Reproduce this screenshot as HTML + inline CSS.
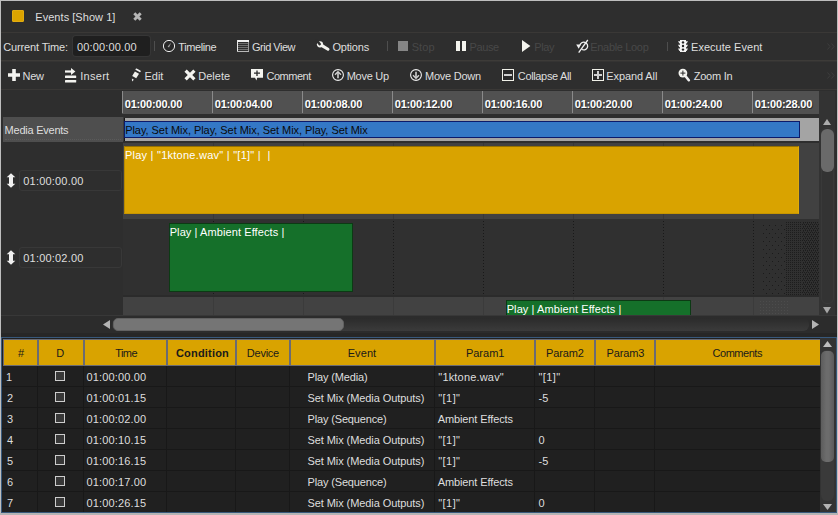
<!DOCTYPE html>
<html><head><meta charset="utf-8"><title>Events [Show 1]</title>
<style>
*{box-sizing:border-box;margin:0;padding:0}
html,body{width:838px;height:515px;overflow:hidden;background:#2e2e2e}
body{position:relative;font-family:"Liberation Sans","DejaVu Sans",sans-serif;font-size:11px;color:#dedede;line-height:13px}
.a{position:absolute;white-space:nowrap}
.t{position:absolute;white-space:nowrap;height:13px;line-height:13px}
.dis{color:#484848}
.sep{position:absolute;width:1px;background:#4e4e4e}
svg{position:absolute;overflow:visible}
.rt{position:absolute;top:98px;height:13px;line-height:13px;font-weight:bold;color:#fff;text-shadow:1px 1px 0 #2b2b2b;white-space:nowrap;letter-spacing:-0.3px}
.tick{position:absolute;top:91px;width:1px;height:22px;background:#8a8a8a}
.gl{position:absolute;width:0;border-left:1px dotted #262626}
.hc{position:absolute;top:340px;height:25px;background:#d9a300;color:#1a1a1a;text-align:center;line-height:26px;white-space:nowrap;overflow:hidden}
.vl{position:absolute;top:366px;width:1px;height:146px;background:#181818}
.hl{position:absolute;left:2px;width:818px;height:1px;background:#181818}
.c{position:absolute;white-space:nowrap;height:13px;line-height:13px}
.cb{position:absolute;left:55px;width:10px;height:10px;border:1px solid #cdcdcd;background:#383838}
</style></head><body>

<!-- tab row -->
<div class="a" style="left:12px;top:10px;width:12px;height:12px;background:#dca400;border:1px solid #e2ac10;border-radius:1px"></div>
<svg style="left:133px;top:12px" width="9" height="9" viewBox="0 0 9 9"><path d="M1.3 1.3L7.7 7.7M7.7 1.3L1.3 7.7" stroke="#b6b6b6" stroke-width="2.9" fill="none"/></svg>
<div class="a" style="left:1px;top:32px;width:836px;height:1px;background:#3a3836"></div>

<!-- toolbar 1 -->
<div class="a" style="left:73px;top:36px;width:77px;height:20px;background:#1f1f1f;border-radius:3px;box-shadow:0 0 0 1px #363636"></div>
<div class="sep" style="left:154px;top:41px;height:10px"></div>
<div class="sep" style="left:387px;top:41px;height:10px"></div>
<div class="sep" style="left:667px;top:42px;height:9px"></div>
<div class="a" style="left:1px;top:60px;width:836px;height:1px;background:#3d3b38"></div><div class="a" style="left:1px;top:61px;width:836px;height:1px;background:#353433"></div>
<svg style="left:827px;top:43px" width="8" height="7" viewBox="0 0 8 7"><path d="M0.5 0.5L3 3.5L0.5 6.5M4.5 0.5L7 3.5L4.5 6.5" stroke="#3d3d3d" stroke-width="1" fill="none"/></svg>
<svg style="left:827px;top:72px" width="8" height="7" viewBox="0 0 8 7"><path d="M0.5 0.5L3 3.5L0.5 6.5M4.5 0.5L7 3.5L4.5 6.5" stroke="#3d3d3d" stroke-width="1" fill="none"/></svg>

<!-- toolbar 1 icons -->
<svg style="left:162px;top:39px" width="14" height="14" viewBox="0 0 14 14"><circle cx="7" cy="7" r="5.6" fill="#282828" stroke="#ececec" stroke-width="1"/><path d="M5.6 7.4L9.2 3.8L7 8.6Z" fill="#a4a4a4"/></svg>
<svg style="left:237px;top:40px" width="12" height="12" viewBox="0 0 12 12"><rect x="0" y="0" width="12" height="2" fill="#f2f2f2"/><rect x="0" y="0" width="1" height="12" fill="#e8e8e8"/><rect x="11" y="2" width="1" height="10" fill="#9a9a9a"/><rect x="0" y="11" width="12" height="1" fill="#b8b8b8"/><rect x="1" y="3" width="10" height="1" fill="#6e6e6e"/><rect x="1" y="5" width="10" height="1" fill="#6e6e6e"/><rect x="1" y="7" width="10" height="1" fill="#6e6e6e"/><rect x="1" y="9" width="10" height="1" fill="#6e6e6e"/></svg>
<svg style="left:317px;top:41px" width="13" height="11" viewBox="0 0 13 11"><path d="M4.6 4.4L11 8.3" stroke="#f2f2ee" stroke-width="3" stroke-linecap="round" fill="none"/><circle cx="3" cy="3.3" r="3.1" fill="#f2f2ee"/><path d="M2.7 3.1L-0.6 -0.8" stroke="#2e2e2e" stroke-width="2.5" stroke-linecap="round" fill="none"/></svg>
<svg style="left:398px;top:41px" width="10" height="10" viewBox="0 0 10 10"><rect width="10" height="10" fill="#868686"/></svg>
<svg style="left:456px;top:41px" width="10" height="10" viewBox="0 0 10 10"><rect x="0" y="0" width="4" height="10" fill="#f4f4ee"/><rect x="6" y="0" width="4" height="10" fill="#f4f4ee"/></svg>
<svg style="left:522px;top:40px" width="9" height="12" viewBox="0 0 9 12"><path d="M0 0L8.4 6L0 12Z" fill="#f4f4ee"/></svg>
<svg style="left:576px;top:39px" width="13" height="14" viewBox="0 0 13 14"><path d="M3.9 6.4A3.9 3.9 0 1 1 5.6 10.3" stroke="#f0f0f0" stroke-width="1.3" fill="none"/><path d="M0.2 5.6L4.9 5.6L2.7 9.8Z" fill="#f0f0f0"/><path d="M2.7 13.6L11.8 1" stroke="#f0f0f0" stroke-width="1.3" fill="none"/></svg>
<svg style="left:678px;top:40px" width="10" height="12" viewBox="0 0 10 12"><path d="M2 0H8V1.2L10 1.2L8.6 3.6H8V4.8L10 4.8L8.6 7.2H8V8.6L10 8.6L8.6 11H8V12H2V11H1.4L0 8.6L2 8.6V7.2H1.4L0 4.8L2 4.8V3.6H1.4L0 1.2L2 1.2Z" fill="#f4f4f4"/><circle cx="5" cy="2.4" r="1.2" fill="#222"/><circle cx="5" cy="6" r="1.2" fill="#222"/><circle cx="5" cy="9.6" r="1.2" fill="#222"/></svg>

<!-- toolbar 2 -->
<div class="a" style="left:1px;top:89px;width:836px;height:1px;background:#3a3836"></div>

<!-- toolbar 2 icons -->
<svg style="left:8px;top:69px" width="12" height="12" viewBox="0 0 12 12"><path d="M4.2 0H7.8V4.2H12V7.8H7.8V12H4.2V7.8H0V4.2H4.2Z" fill="#f4f4f0"/></svg>
<svg style="left:65px;top:68px" width="12" height="15" viewBox="0 0 12 15"><rect x="0" y="2.4" width="7" height="2.2" fill="#f4f4f0"/><path d="M6 0L10.4 3.5L6 7Z" fill="#f4f4f0"/><rect x="0" y="7.4" width="11.2" height="2.6" rx="0.6" fill="#f4f4f0"/><rect x="0" y="12" width="11.2" height="2.6" rx="0.6" fill="#f4f4f0"/></svg>
<svg style="left:131px;top:68px" width="10" height="14" viewBox="0 0 10 14"><path d="M5.3 1.3L8.9 3.3" stroke="#f0f0f0" stroke-width="1.7" stroke-linecap="round" fill="none"/><path d="M3.9 3.5L8 5.7L5.2 10.3L1.2 8Z" fill="#f2f2ee"/><path d="M0.9 10.6L2.9 11.8L1 13.4Z" fill="#e8e8e8"/></svg>
<svg style="left:184px;top:69px" width="12" height="12" viewBox="0 0 12 12"><path d="M1.6 1.6L10.4 10.4M10.4 1.6L1.6 10.4" stroke="#f4f4f0" stroke-width="3.2" fill="none"/></svg>
<svg style="left:251px;top:69px" width="12" height="12" viewBox="0 0 12 12"><path d="M0 0H12V8.8H6.2L5.4 11.6L4 8.8H0Z" fill="#f4f4f0"/><path d="M3 4.2H9M6 1.4V7" stroke="#2a2a2a" stroke-width="1.3" fill="none"/></svg>
<svg style="left:332px;top:69px" width="12" height="12" viewBox="0 0 12 12"><circle cx="6" cy="6" r="5.4" fill="#262626" stroke="#f0f0f0" stroke-width="1.1"/><path d="M6 3.2V9.3" stroke="#b4b4b4" stroke-width="1.9" fill="none"/><path d="M3 5.8L6 2.7L9 5.8" stroke="#cfcfcf" stroke-width="1.4" fill="none"/></svg>
<svg style="left:410px;top:69px" width="12" height="12" viewBox="0 0 12 12"><circle cx="6" cy="6" r="5.4" fill="#262626" stroke="#f0f0f0" stroke-width="1.1"/><path d="M6 8.8V2.7" stroke="#b4b4b4" stroke-width="1.9" fill="none"/><path d="M3 6.2L6 9.3L9 6.2" stroke="#cfcfcf" stroke-width="1.4" fill="none"/></svg>
<svg style="left:502px;top:69px" width="12" height="12" viewBox="0 0 12 12"><rect x="0.5" y="0.5" width="11" height="11" fill="#2a2a2a" stroke="#f0f0e8" stroke-width="1"/><rect x="2" y="5" width="8" height="2" fill="#d0d0d0"/></svg>
<svg style="left:592px;top:69px" width="12" height="12" viewBox="0 0 12 12"><rect x="0.5" y="0.5" width="11" height="11" fill="#2a2a2a" stroke="#f0f0e8" stroke-width="1"/><rect x="2" y="5" width="8" height="2" fill="#d0d0d0"/><rect x="5" y="2" width="2" height="8" fill="#d0d0d0"/></svg>
<svg style="left:678px;top:68px" width="13" height="14" viewBox="0 0 13 14"><path d="M6.6 7L10.8 12.2" stroke="#f0f0f0" stroke-width="2.6" stroke-linecap="round" fill="none"/><circle cx="4.9" cy="5.1" r="4.4" fill="#f4f4f0"/><path d="M2.4 5.1H7.4M4.9 2.6V7.6" stroke="#2a2a2a" stroke-width="1" fill="none"/></svg>

<!-- ================= timeline ================= -->
<!-- ruler -->
<div class="a" style="left:819px;top:91px;width:16px;height:225px;background:#333"></div>
<div class="a" style="left:122px;top:91px;width:697px;height:23px;background:#515151"></div>
<div class="tick" style="left:122px"></div>
<div class="tick" style="left:212px"></div>
<div class="tick" style="left:302px"></div>
<div class="tick" style="left:392px"></div>
<div class="tick" style="left:482px"></div>
<div class="tick" style="left:572px"></div>
<div class="tick" style="left:662px"></div>
<div class="tick" style="left:752px"></div>

<!-- media events row -->
<div class="a" style="left:3px;top:117px;width:120px;height:25px;background:#4e4e4e"></div><div class="a" style="left:5px;top:139px;width:116px;height:0;border-top:1px dotted #5a5a5a"></div>
<div class="a" style="left:123px;top:117px;width:1px;height:24px;background:#3a3a3a"></div><div class="a" style="left:124px;top:118px;width:1px;height:23px;background:#141414"></div>
<div class="a" style="left:125px;top:118px;width:694px;height:23px;background:#a4a4a4"></div>
<div class="a" style="left:124px;top:121px;width:676px;height:17px;background:#3478c6;border:1px solid #0c1a6a"></div>

<!-- row backgrounds -->
<div class="a" style="left:123px;top:143px;width:696px;height:76px;background:#414141"></div>
<div class="a" style="left:123px;top:219px;width:696px;height:76px;background:#303030"></div>
<div class="a" style="left:123px;top:295px;width:696px;height:2px;background:#2b2b2b"></div>
<div class="a" style="left:123px;top:297px;width:696px;height:18px;background:#424242"></div>
<svg style="left:123px;top:143px" width="696" height="172" viewBox="123 143 696 172" shape-rendering="crispEdges"><defs><pattern id="d4" width="4" height="4" patternUnits="userSpaceOnUse"><rect x="1" y="1" width="1" height="1" fill="#1d1d1d"/><rect x="3" y="3" width="1" height="1" fill="#1d1d1d" opacity="0"/></pattern><pattern id="d5" width="6" height="8" patternUnits="userSpaceOnUse"><rect x="1" y="1" width="1" height="1" fill="#1b1b1b"/><rect x="4" y="5" width="1" height="1" fill="#1b1b1b"/></pattern><pattern id="d2" width="2" height="2" patternUnits="userSpaceOnUse"><rect x="0" y="0" width="1" height="1" fill="#1d1d1d"/></pattern><pattern id="d3" width="4" height="4" patternUnits="userSpaceOnUse"><rect x="0" y="0" width="1" height="1" fill="#1c1c1c"/><rect x="2" y="0" width="1" height="1" fill="#1c1c1c"/><rect x="1" y="2" width="1" height="1" fill="#1c1c1c"/><rect x="3" y="2" width="1" height="1" fill="#1c1c1c"/><rect x="1" y="1" width="1" height="1" fill="#1c1c1c" opacity="0.6"/><rect x="3" y="3" width="1" height="1" fill="#1c1c1c" opacity="0.6"/></pattern><pattern id="l4" width="3" height="3" patternUnits="userSpaceOnUse"><rect x="1" y="1" width="1" height="1" fill="#4c4c4c"/></pattern></defs><rect x="213" y="143" width="1" height="76" fill="#383838"/><line x1="213.5" y1="221" x2="213.5" y2="295" stroke="#191919" stroke-width="1" stroke-dasharray="1 2"/><rect x="213" y="297" width="1" height="18" fill="#3b3b3b"/><rect x="303" y="143" width="1" height="76" fill="#383838"/><line x1="303.5" y1="221" x2="303.5" y2="295" stroke="#191919" stroke-width="1" stroke-dasharray="1 2"/><rect x="303" y="297" width="1" height="18" fill="#3b3b3b"/><rect x="393" y="143" width="1" height="76" fill="#383838"/><line x1="393.5" y1="221" x2="393.5" y2="295" stroke="#191919" stroke-width="1" stroke-dasharray="1 2"/><rect x="393" y="297" width="1" height="18" fill="#3b3b3b"/><rect x="483" y="143" width="1" height="76" fill="#383838"/><line x1="483.5" y1="221" x2="483.5" y2="295" stroke="#191919" stroke-width="1" stroke-dasharray="1 2"/><rect x="483" y="297" width="1" height="18" fill="#3b3b3b"/><rect x="573" y="143" width="1" height="76" fill="#383838"/><line x1="573.5" y1="221" x2="573.5" y2="295" stroke="#191919" stroke-width="1" stroke-dasharray="1 2"/><rect x="573" y="297" width="1" height="18" fill="#3b3b3b"/><rect x="663" y="143" width="1" height="76" fill="#383838"/><line x1="663.5" y1="221" x2="663.5" y2="295" stroke="#191919" stroke-width="1" stroke-dasharray="1 2"/><rect x="663" y="297" width="1" height="18" fill="#3b3b3b"/><rect x="753" y="143" width="1" height="76" fill="#383838"/><line x1="753.5" y1="221" x2="753.5" y2="295" stroke="#191919" stroke-width="1" stroke-dasharray="1 2"/><rect x="753" y="297" width="1" height="18" fill="#3b3b3b"/><rect x="763" y="222" width="23" height="73" fill="url(#d5)"/><rect x="786" y="222" width="16" height="73" fill="url(#d2)"/><rect x="802" y="222" width="17" height="73" fill="url(#d3)"/><rect x="760" y="299" width="30" height="16" fill="url(#l4)"/></svg>
<!-- row 1 -->
<div class="a" style="left:124px;top:146px;width:675px;height:68px;background:#d9a300;border:1px solid #b88a00;border-top-color:#987200;border-right-color:#e0ac08;border-bottom-color:#c89600"></div>
<div class="a" style="left:19px;top:170px;width:103px;height:21px;border:1px solid #383838;border-radius:3px"></div>
<svg style="left:6px;top:173px" width="10" height="15" viewBox="0 0 10 15"><path d="M5 0.3L9.3 4.3H7V10.7H9.3L5 14.7L0.7 10.7H3V4.3H0.7Z" fill="#f0f0f0"/></svg>
<!-- row 2 -->
<div class="a" style="left:169px;top:223px;width:184px;height:69px;background:#15702a;border:1px solid #0c3a14"></div>
<div class="a" style="left:19px;top:247px;width:103px;height:21px;border:1px solid #383838;border-radius:3px"></div>
<svg style="left:6px;top:250px" width="10" height="15" viewBox="0 0 10 15"><path d="M5 0.3L9.3 4.3H7V10.7H9.3L5 14.7L0.7 10.7H3V4.3H0.7Z" fill="#f0f0f0"/></svg>
<!-- row 3 -->
<div class="a" style="left:506px;top:300px;width:185px;height:15px;background:#15702a;border:1px solid #0c3a14;border-bottom:none"></div>

<!-- timeline vscroll -->
<svg style="left:823px;top:119px" width="8" height="6" viewBox="0 0 8 6"><path d="M4 0L8 6H0Z" fill="#adadad"/></svg>
<div class="a" style="left:821px;top:127px;width:13px;height:177px;border:1px solid #393939;border-radius:6px"></div>
<div class="a" style="left:821px;top:129px;width:13px;height:43px;background:#6a6a6a;border-radius:6px"></div>
<svg style="left:823px;top:307px" width="8" height="7" viewBox="0 0 8 7"><path d="M0 0H8L4 6.6Z" fill="#a6a6a6"/></svg>

<!-- hscroll -->
<div class="a" style="left:1px;top:315px;width:836px;height:22px;background:#2c2c2c"></div><div class="a" style="left:1px;top:315px;width:836px;height:1px;background:#383838"></div><div class="a" style="left:1px;top:333px;width:836px;height:4px;background:#272727"></div>
<div class="a" style="left:112px;top:318px;width:697px;height:13px;background:linear-gradient(#2b2b2b,#3b3b3b);border-radius:6px"></div>
<div class="a" style="left:113px;top:318px;width:231px;height:13px;background:#757575;border:1px solid #626262;border-radius:5px"></div>
<svg style="left:103px;top:320px" width="7" height="9" viewBox="0 0 7 9"><path d="M7 0V9L0 4.5Z" fill="#b4b4b4"/></svg>
<svg style="left:812px;top:320px" width="7" height="9" viewBox="0 0 7 9"><path d="M0 0V9L7 4.5Z" fill="#b4b4b4"/></svg>

<!-- ================= grid ================= -->
<div class="a" style="left:1px;top:337px;width:836px;height:176px;background:#202020;border:1px solid #38597c"></div>
<div class="a" style="left:3px;top:339px;width:817px;height:27px;background:#6b6b73"></div>
<div class="a" style="left:820px;top:338px;width:16px;height:174px;background:#333"></div>
<div class="hc" style="left:4px;width:33px"></div>
<div class="hc" style="left:39px;width:44px"></div>
<div class="hc" style="left:85px;width:81px"></div>
<div class="hc" style="left:168px;width:67px;font-weight:bold"></div>
<div class="hc" style="left:237px;width:52px"></div>
<div class="hc" style="left:291px;width:143px"></div>
<div class="hc" style="left:436px;width:98px"></div>
<div class="hc" style="left:536px;width:58px"></div>
<div class="hc" style="left:596px;width:58px"></div>
<div class="hc" style="left:656px;width:164px"></div>

<div class="vl" style="left:37px"></div>
<div class="vl" style="left:83px"></div>
<div class="vl" style="left:166px"></div>
<div class="vl" style="left:235px"></div>
<div class="vl" style="left:289px"></div>
<div class="vl" style="left:434px"></div>
<div class="vl" style="left:534px"></div>
<div class="vl" style="left:594px"></div>
<div class="vl" style="left:654px"></div>
<div class="hl" style="top:386px"></div>
<div class="hl" style="top:407px"></div>
<div class="hl" style="top:428px"></div>
<div class="hl" style="top:449px"></div>
<div class="hl" style="top:470px"></div>
<div class="hl" style="top:491px"></div>
<div class="cb" style="top:371px"></div>
<div class="cb" style="top:392px"></div>
<div class="cb" style="top:413px"></div>
<div class="cb" style="top:434px"></div>
<div class="cb" style="top:455px"></div>
<div class="cb" style="top:476px"></div>
<div class="cb" style="top:497px"></div>
<svg style="left:823px;top:341px" width="9" height="6" viewBox="0 0 9 6"><path d="M4.5 0L9 6H0Z" fill="#bdbdbd"/></svg>
<div class="a" style="left:821px;top:350px;width:13px;height:151px;background:#3a3a3a;border-radius:6px"></div>
<div class="a" style="left:821px;top:351px;width:13px;height:111px;background:linear-gradient(90deg,#5c5c5c,#6c6c6c 40%,#6c6c6c 60%,#5a5a5a);border-radius:5px"></div>
<svg style="left:823px;top:504px" width="9" height="6" viewBox="0 0 9 6"><path d="M0 0H9L4.5 6Z" fill="#b4b4b4"/></svg>
<div class="t" style="left:35.3px;top:11px;letter-spacing:0.04px;">Events [Show 1]</div>
<div class="t" style="left:3.3px;top:41px;letter-spacing:-0.15px;">Current Time:</div>
<div class="t" style="left:77.0px;top:41px;letter-spacing:0.16px;">00:00:00.00</div>
<div class="t" style="left:178.3px;top:41px;letter-spacing:-0.40px;">Timeline</div>
<div class="t" style="left:252.0px;top:41px;letter-spacing:-0.50px;">Grid View</div>
<div class="t" style="left:332.4px;top:41px;letter-spacing:-0.18px;">Options</div>
<div class="t dis" style="left:411.7px;top:41px;letter-spacing:0.10px;">Stop</div>
<div class="t dis" style="left:469.5px;top:41px;letter-spacing:-0.38px;">Pause</div>
<div class="t dis" style="left:534.3px;top:41px;letter-spacing:-0.43px;">Play</div>
<div class="t dis" style="left:590.3px;top:41px;letter-spacing:-0.33px;">Enable Loop</div>
<div class="t" style="left:691.0px;top:41px;letter-spacing:0.04px;">Execute Event</div>
<div class="t" style="left:22.4px;top:70px;letter-spacing:-0.20px;">New</div>
<div class="t" style="left:80.3px;top:70px;letter-spacing:0.26px;">Insert</div>
<div class="t" style="left:144.5px;top:70px;letter-spacing:-0.03px;">Edit</div>
<div class="t" style="left:198.2px;top:70px;letter-spacing:0.02px;">Delete</div>
<div class="t" style="left:266.5px;top:70px;letter-spacing:-0.48px;">Comment</div>
<div class="t" style="left:346.7px;top:70px;letter-spacing:-0.28px;">Move Up</div>
<div class="t" style="left:425.1px;top:70px;letter-spacing:-0.26px;">Move Down</div>
<div class="t" style="left:517.8px;top:70px;letter-spacing:-0.35px;">Collapse All</div>
<div class="t" style="left:606.3px;top:70px;letter-spacing:-0.10px;">Expand All</div>
<div class="t" style="left:693.7px;top:70px;letter-spacing:-0.23px;">Zoom In</div>
<div class="rt" style="left:124.7px;top:98px;letter-spacing:-0.17px;">01:00:00.00</div>
<div class="rt" style="left:214.7px;top:98px;letter-spacing:-0.17px;">01:00:04.00</div>
<div class="rt" style="left:304.7px;top:98px;letter-spacing:-0.17px;">01:00:08.00</div>
<div class="rt" style="left:394.7px;top:98px;letter-spacing:-0.17px;">01:00:12.00</div>
<div class="rt" style="left:484.7px;top:98px;letter-spacing:-0.17px;">01:00:16.00</div>
<div class="rt" style="left:574.7px;top:98px;letter-spacing:-0.17px;">01:00:20.00</div>
<div class="rt" style="left:664.7px;top:98px;letter-spacing:-0.17px;">01:00:24.00</div>
<div class="rt" style="left:754.7px;top:98px;letter-spacing:-0.17px;">01:00:28.00</div>
<div class="t" style="left:4.6px;top:124px;letter-spacing:-0.24px;">Media Events</div>
<div class="t" style="left:125.2px;top:124px;letter-spacing:-0.05px;color:#0a0a0a">Play, Set Mix, Play, Set Mix, Set Mix, Play, Set Mix</div>
<div class="t" style="left:124.9px;top:149px;letter-spacing:0.25px;color:#fff">Play | "1ktone.wav" | "[1]" |&nbsp; |</div>
<div class="t" style="left:23.3px;top:175px;letter-spacing:0.19px;">01:00:00.00</div>
<div class="t" style="left:169.7px;top:226px;letter-spacing:0.09px;color:#fff">Play | Ambient Effects |</div>
<div class="t" style="left:23.3px;top:252px;letter-spacing:0.19px;">01:00:02.00</div>
<div class="t" style="left:506.7px;top:303px;letter-spacing:0.09px;color:#fff">Play | Ambient Effects |</div>
<div class="t" style="left:18.0px;top:347px;color:#1a1a1a">#</div>
<div class="t" style="left:56.3px;top:347px;color:#1a1a1a">D</div>
<div class="t" style="left:115.3px;top:347px;letter-spacing:-0.60px;color:#1a1a1a">Time</div>
<div class="t b" style="left:176.0px;top:347px;letter-spacing:0.18px;color:#1a1a1a;font-weight:bold">Condition</div>
<div class="t" style="left:246.8px;top:347px;letter-spacing:-0.24px;color:#1a1a1a">Device</div>
<div class="t" style="left:347.7px;top:347px;letter-spacing:0.08px;color:#1a1a1a">Event</div>
<div class="t" style="left:465.9px;top:347px;color:#1a1a1a">Param1</div>
<div class="t" style="left:546.1px;top:347px;letter-spacing:-0.14px;color:#1a1a1a">Param2</div>
<div class="t" style="left:606.6px;top:347px;letter-spacing:-0.16px;color:#1a1a1a">Param3</div>
<div class="t" style="left:712.5px;top:347px;letter-spacing:-0.46px;color:#1a1a1a">Comments</div>
<div class="t" style="left:6.0px;top:371px;">1</div>
<div class="t" style="left:86.6px;top:371px;letter-spacing:0.14px;">01:00:00.00</div>
<div class="t" style="left:307.5px;top:371px;letter-spacing:-0.14px;">Play (Media)</div>
<div class="t" style="left:438.3px;top:371px;letter-spacing:0.18px;">&quot;1ktone.wav&quot;</div>
<div class="t" style="left:538.5px;top:371px;letter-spacing:0.38px;">&quot;[1]&quot;</div>
<div class="t" style="left:7.0px;top:392px;">2</div>
<div class="t" style="left:86.6px;top:392px;letter-spacing:0.14px;">01:00:01.15</div>
<div class="t" style="left:307.5px;top:392px;letter-spacing:-0.08px;">Set Mix (Media Outputs)</div>
<div class="t" style="left:438.3px;top:392px;letter-spacing:0.42px;">&quot;[1]&quot;</div>
<div class="t" style="left:538.5px;top:392px;">-5</div>
<div class="t" style="left:7.0px;top:413px;">3</div>
<div class="t" style="left:86.6px;top:413px;letter-spacing:0.14px;">01:00:02.00</div>
<div class="t" style="left:307.5px;top:413px;letter-spacing:-0.15px;">Play (Sequence)</div>
<div class="t" style="left:437.7px;top:413px;letter-spacing:-0.11px;">Ambient Effects</div>
<div class="t" style="left:7.0px;top:434px;">4</div>
<div class="t" style="left:86.6px;top:434px;letter-spacing:0.14px;">01:00:10.15</div>
<div class="t" style="left:307.5px;top:434px;letter-spacing:-0.08px;">Set Mix (Media Outputs)</div>
<div class="t" style="left:438.3px;top:434px;letter-spacing:0.42px;">&quot;[1]&quot;</div>
<div class="t" style="left:538.5px;top:434px;">0</div>
<div class="t" style="left:7.0px;top:455px;">5</div>
<div class="t" style="left:86.6px;top:455px;letter-spacing:0.14px;">01:00:16.15</div>
<div class="t" style="left:307.5px;top:455px;letter-spacing:-0.08px;">Set Mix (Media Outputs)</div>
<div class="t" style="left:438.3px;top:455px;letter-spacing:0.42px;">&quot;[1]&quot;</div>
<div class="t" style="left:538.5px;top:455px;">-5</div>
<div class="t" style="left:7.0px;top:476px;">6</div>
<div class="t" style="left:86.6px;top:476px;letter-spacing:0.14px;">01:00:17.00</div>
<div class="t" style="left:307.5px;top:476px;letter-spacing:-0.15px;">Play (Sequence)</div>
<div class="t" style="left:437.7px;top:476px;letter-spacing:-0.11px;">Ambient Effects</div>
<div class="t" style="left:7.0px;top:497px;">7</div>
<div class="t" style="left:86.6px;top:497px;letter-spacing:0.14px;">01:00:26.15</div>
<div class="t" style="left:307.5px;top:497px;letter-spacing:-0.08px;">Set Mix (Media Outputs)</div>
<div class="t" style="left:438.3px;top:497px;letter-spacing:0.42px;">&quot;[1]&quot;</div>
<div class="t" style="left:538.5px;top:497px;">0</div>
<!-- window frame -->
<div class="a" style="left:0;top:0;width:838px;height:1px;background:#bebebe"></div>
<div class="a" style="left:0;top:0;width:1px;height:515px;background:#bebebe"></div>
<div class="a" style="left:837px;top:0;width:1px;height:515px;background:#bebebe"></div>
<div class="a" style="left:0;top:513px;width:838px;height:2px;background:#b4b4b4"></div>
</body></html>
